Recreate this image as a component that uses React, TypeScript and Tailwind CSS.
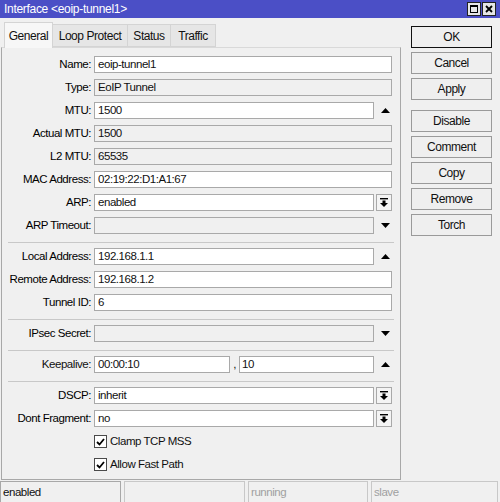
import React from 'react';

type Suffix = 'up' | 'down' | 'dd' | undefined;

function UpArrow() {
  return (
    <svg width="9" height="5" viewBox="0 0 9 5">
      <polygon points="0,5 9,5 4.5,0" fill="#000" />
    </svg>
  );
}

function DownArrow() {
  return (
    <svg width="9" height="5" viewBox="0 0 9 5">
      <polygon points="0,0 9,0 4.5,5" fill="#000" />
    </svg>
  );
}

function DropIcon() {
  return (
    <svg width="8" height="9" viewBox="0 0 8 9">
      <rect x="0" y="0" width="8" height="1.4" fill="#000" />
      <rect x="2.5" y="2.5" width="3" height="2.5" fill="#000" />
      <polygon points="0,5 8,5 4,9" fill="#000" />
    </svg>
  );
}

function Field({ label, value, readOnly, suffix }: { label: string; value?: string; readOnly?: boolean; suffix?: Suffix }) {
  return (
    <div className="flex items-center h-[23px]">
      <div className="w-[89px] text-right text-black">{label}:</div>
      <div
        className={`ml-[3px] h-[17px] border border-[#a9a9a9] pl-[3px] flex items-center ${
          suffix ? 'w-[280px]' : 'w-[298px]'
        } ${readOnly ? 'bg-[#f0f0f0]' : 'bg-white'}`}
      >
        {value}
      </div>
      {(suffix === 'up' || suffix === 'down') && (
        <div className="w-[22px] flex items-center justify-center">
          {suffix === 'up' ? <UpArrow /> : <DownArrow />}
        </div>
      )}
      {suffix === 'dd' && (
        <div className="ml-[2px] w-[16px] h-[17px] border border-[#a9a9a9] bg-[#f4f4f4] flex items-center justify-center">
          <DropIcon />
        </div>
      )}
    </div>
  );
}

function Sep() {
  return (
    <div className="pt-[5px] pb-[2px] pl-[6px] pr-[6px]">
      <div className="border-t border-[#c8c8c8]" />
    </div>
  );
}

function Check({ label }: { label: string }) {
  return (
    <div className="flex items-center h-[23px] pl-[92px]">
      <div className="w-[13px] h-[13px] border border-[#4a4a4a] bg-white flex items-center justify-center">
        <svg width="9" height="8" viewBox="0 0 9 8">
          <path d="M1 4 L3.5 6.5 L8 1" stroke="#000" strokeWidth="1.8" fill="none" />
        </svg>
      </div>
      <span className="ml-[3px]">{label}</span>
    </div>
  );
}

const buttons = [['OK', 'Cancel', 'Apply'], ['Disable', 'Comment', 'Copy', 'Remove', 'Torch']];

export default function App() {
  return (
    <div className="w-[500px] h-[502px] bg-[#f0f0f0] flex flex-col font-['Liberation_Sans',Arial,sans-serif] text-[11.5px] tracking-[-0.45px] text-[#111] overflow-hidden">
      {/* title bar */}
      <div className="h-[18px] bg-[#4b4fc6] flex items-center justify-between pl-[4px] pr-[4px]">
        <span className="text-white text-[12px] tracking-[-0.3px]">Interface &lt;eoip-tunnel1&gt;</span>
        <div className="flex gap-[1px]">
          <div className="w-[14px] h-[14px] bg-[#e6e6e6] border border-[#222] flex items-center justify-center">
            <div className="w-[8px] h-[8px] border border-black border-t-2" />
          </div>
          <div className="w-[14px] h-[14px] bg-[#e6e6e6] border border-[#222] flex items-center justify-center">
            <svg width="8" height="8" viewBox="0 0 8 8">
              <path d="M1 1 L7 7 M7 1 L1 7" stroke="#000" strokeWidth="1.8" />
            </svg>
          </div>
        </div>
      </div>

      <div className="flex flex-1">
        {/* left: tabs + panel */}
        <div className="w-[401px] pl-[1px] flex flex-col pt-[3px]">
          <div className="flex items-end h-[26px] pl-[3px]">
            <div className="h-[26px] w-[49px] bg-[#f7f7f7] border border-b-0 border-[#d4d4d4] flex items-center justify-center text-[12px] relative top-[1px]">
              General
            </div>
            <div className="h-[23px] w-[75px] bg-[#e6e6e6] border border-l-0 border-[#d4d4d4] flex items-center justify-center text-[12px]">
              Loop Protect
            </div>
            <div className="h-[23px] w-[43px] bg-[#e6e6e6] border border-l-0 border-[#d4d4d4] flex items-center justify-center text-[12px]">
              Status
            </div>
            <div className="h-[23px] w-[45px] bg-[#e6e6e6] border border-l-0 border-[#d4d4d4] flex items-center justify-center text-[12px]">
              Traffic
            </div>
          </div>
          <div className="flex-1 border border-t-[#d9d9d9] border-[#a8a8a8] pt-[5px] mb-[1px]">
            <Field label="Name" value="eoip-tunnel1" />
            <Field label="Type" value="EoIP Tunnel" readOnly />
            <Field label="MTU" value="1500" suffix="up" />
            <Field label="Actual MTU" value="1500" readOnly />
            <Field label="L2 MTU" value="65535" readOnly />
            <Field label="MAC Address" value="02:19:22:D1:A1:67" />
            <Field label="ARP" value="enabled" suffix="dd" />
            <Field label="ARP Timeout" readOnly suffix="down" />
            <Sep />
            <Field label="Local Address" value="192.168.1.1" suffix="up" />
            <Field label="Remote Address" value="192.168.1.2" />
            <Field label="Tunnel ID" value="6" />
            <Sep />
            <Field label="IPsec Secret" readOnly suffix="down" />
            <Sep />
            <div className="flex items-center h-[23px]">
              <div className="w-[89px] text-right">Keepalive:</div>
              <div className="ml-[3px] w-[136px] h-[17px] border border-[#a9a9a9] bg-white pl-[3px] flex items-center">00:00:10</div>
              <div className="w-[9px] text-center self-end pb-[3px]">,</div>
              <div className="w-[135px] h-[17px] border border-[#a9a9a9] bg-white pl-[2px] flex items-center">10</div>
              <div className="w-[22px] flex items-center justify-center">
                <UpArrow />
              </div>
            </div>
            <Sep />
            <Field label="DSCP" value="inherit" suffix="dd" />
            <Field label="Dont Fragment" value="no" suffix="dd" />
            <Check label="Clamp TCP MSS" />
            <Check label="Allow Fast Path" />
          </div>
        </div>

        {/* right: buttons */}
        <div className="ml-[10px] w-[81px] pt-[8px] flex flex-col gap-[10px]">
          {buttons.map((group, gi) => (
            <div key={gi} className="flex flex-col gap-[4px]">
              {group.map((b) => (
                <div
                  key={b}
                  className={`h-[22px] flex items-center justify-center text-[12px] bg-[#efefef] border ${
                    b === 'OK' ? 'border-[#111] border-[1.5px]' : 'border-[#9a9a9a]'
                  }`}
                >
                  {b}
                </div>
              ))}
            </div>
          ))}
        </div>
      </div>

      {/* status bar */}
      <div className="h-[21px] flex gap-[3px] pl-[0px]">
        <div className="w-[121px] border-t border-l border-r border-[#a8a8a8] pl-[2px] pt-[2px]">enabled</div>
        <div className="w-[121px] border-t border-l border-r border-[#c8c8c8]" />
        <div className="w-[120px] border-t border-l border-r border-[#c8c8c8] pl-[2px] pt-[2px] text-[#a0a0a0]">running</div>
        <div className="w-[127px] border-t border-l border-r border-[#c8c8c8] pl-[2px] pt-[2px] text-[#a0a0a0]">slave</div>
      </div>
    </div>
  );
}
